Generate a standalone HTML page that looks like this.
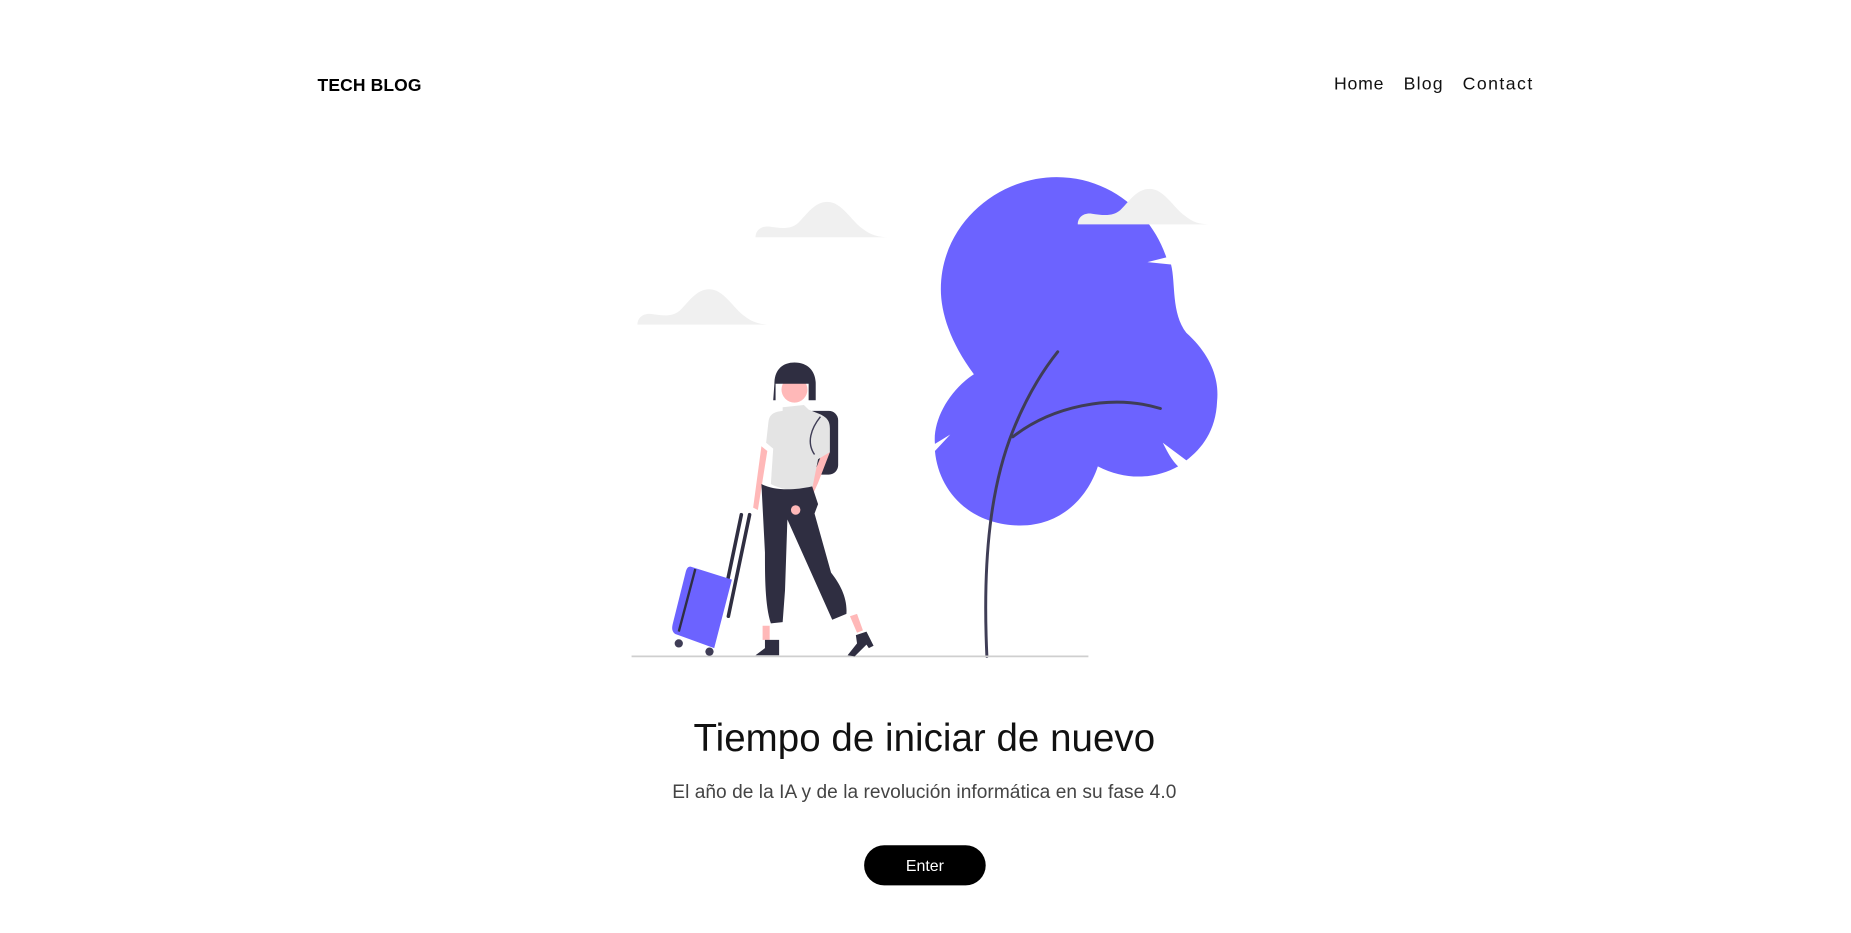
<!DOCTYPE html>
<html><head><meta charset="utf-8"><style>
html,body{margin:0;padding:0;background:#fff;width:1851px;height:933px;overflow:hidden}
svg{display:block}
text{font-family:"Liberation Sans",sans-serif}
</style></head><body>
<svg width="1851" height="933" viewBox="0 0 1568 790.3" xmlns="http://www.w3.org/2000/svg">
<text x="269" y="77" font-size="14.8" font-weight="bold" fill="#000" textLength="88">TECH BLOG</text>
<text x="1130" y="76" font-size="15" fill="#111" textLength="42">Home</text>
<text x="1189" y="76" font-size="15" fill="#111" textLength="33">Blog</text>
<text x="1239" y="76" font-size="15" fill="#111" textLength="59">Contact</text>

<g fill="#f0f0f0">
<path d="M640,201 c0,-6 5,-10 12,-9 c8,1 17,3 24,-3 c8,-8 14,-18 25,-18 c12,0 20,16 30,23 c6,5 14,7 21,7 z"/>
<path d="M540,275 c0,-6 5,-10 12,-9 c8,1 17,3 24,-3 c8,-8 14,-18 25,-18 c12,0 20,16 30,23 c6,5 14,7 21,7 z"/>
</g>
<path fill="#6c63ff" d="M895,150 C940,150 975,180 988,218 L972,222 L992,224 C996,240 992,265 1005,282 C1025,300 1033,320 1031,340 C1030,365 1018,380 1005,390 L985,375 C990,385 993,390 998,395 C980,405 955,408 930,395 C920,425 895,447 860,445 C820,443 795,415 792,382 L805,368 L792,376 C790,355 805,330 825,317 C805,290 797,265 797,245 C797,190 845,150 895,150 Z"/>
<path fill="#f0f0f0" d="M913,190 c0,-6 5,-10 12,-9 c8,1 17,3 24,-3 c8,-8 14,-18 25,-18 c12,0 20,16 30,23 c6,5 12,7 20,7 z"/>
<g fill="none" stroke="#3f3d56" stroke-width="2.5" stroke-linecap="round">
<path d="M836,556 C832,470 840,410 858,365 C868,340 880,318 896,298"/>
<path d="M858,370 C890,345 940,333 983,346"/>
</g>
<line x1="535" y1="556" x2="922" y2="556" stroke="#cfcfcf" stroke-width="1.5"/>
<path fill="#2f2e41" d="M688,348 h14 a8,8 0 0 1 8,8 v38 a8,8 0 0 1 -8,8 h-10 z"/>
<path fill="#ffb8b8" d="M645,378 l-7,52 l4,2 l8,-50 z M698,380 l-12,30 l-8,18 l5,3 l10,-22 l10,-26 z"/>
<circle cx="673" cy="330" r="11" fill="#ffb8b8"/>
<path fill="#2f2e41" d="M656,325 c0,-12 7,-18 17,-18 c12,0 18,8 18,18 v14 h-6 v-14 h-28 v14 h-2 z"/>
<path fill="#e4e4e4" d="M663,345 l18,-2 l4,4 l10,4 c6,3 8,6 8,12 l0,20 l-10,6 l-5,25 c-15,3 -28,0 -35,-4 l2,-30 l-6,-5 l2,-18 c1,-6 4,-8 12,-9 z"/>
<path fill="none" stroke="#3f3d56" stroke-width="1.2" d="M695,353 c-8,10 -12,22 -5,32"/>
<path fill="#2f2e41" d="M645,410 c10,5 25,6 43,2 l5,15 l-3,8 l14,50 c8,10 14,22 13,35 l-12,5 l-38,-85 l-2,60 l-2,27 l-10,1 c-5,-15 -5,-40 -5,-60 z"/>
<path fill="#ffb8b8" d="M646,530 h6 v12 h-6 z M720,522 l6,-2 l5,14 l-5,2 z"/>
<path fill="#2f2e41" d="M640,555 l8,-6 v-7 h12 v13 z M718,555 l8,-10 l-1,-7 l9,-3 l6,12 l-4,2 l-2,-3 l-10,10 z"/>
<circle cx="674" cy="432" r="4" fill="#ffb8b8"/>
<path fill="none" stroke="#2f2e41" stroke-width="3" stroke-linecap="round" d="M628,436 L610,522 M635,436 L617,522"/>
<path fill="#6c63ff" d="M585,480 l35,11 l-15,58 l-33,-12 c-3,-2 -3,-5 -2,-9 l11,-44 c1,-3 2,-4 4,-4 z"/>
<path fill="none" stroke="#2f2e41" stroke-width="2" d="M589,482 L575,535"/>
<circle cx="575" cy="545" r="3.5" fill="#3f3d56"/>
<circle cx="601" cy="552" r="3.5" fill="#3f3d56"/>

<text x="783" y="636" font-size="32.6" fill="#111" text-anchor="middle" textLength="391">Tiempo de iniciar de nuevo</text>
<text x="783" y="676" font-size="16.2" fill="#444" text-anchor="middle" textLength="427">El año de la IA y de la revolución informática en su fase 4.0</text>
<rect x="732" y="716" width="103" height="34" rx="17" fill="#000"/>
<text x="783.5" y="738" font-size="13.5" fill="#fff" text-anchor="middle">Enter</text>
</svg>
</body></html>
